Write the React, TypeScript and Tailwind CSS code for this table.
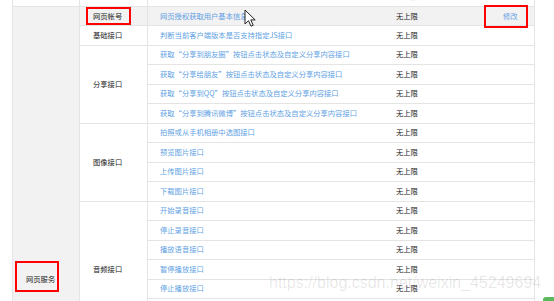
import React from "react";

type Group = { name: string; items: string[]; hl?: boolean };

const groups: Group[] = [
  { name: "网页帐号", items: ["网页授权获取用户基本信息"], hl: true },
  { name: "基础接口", items: ["判断当前客户端版本是否支持指定JS接口"] },
  {
    name: "分享接口",
    items: [
      "获取“分享到朋友圈”按钮点击状态及自定义分享内容接口",
      "获取“分享给朋友”按钮点击状态及自定义分享内容接口",
      "获取“分享到QQ”按钮点击状态及自定义分享内容接口",
      "获取“分享到腾讯微博”按钮点击状态及自定义分享内容接口",
    ],
  },
  {
    name: "图像接口",
    items: ["拍照或从手机相册中选图接口", "预览图片接口", "上传图片接口", "下载图片接口"],
  },
  {
    name: "音频接口",
    items: [
      "开始录音接口",
      "停止录音接口",
      "播放语音接口",
      "暂停播放接口",
      "停止播放接口",
      "上传语音接口",
      "下载语音接口",
    ],
  },
  { name: "智能接口", items: ["识别音频并返回识别结果接口"] },
  { name: "设备信息", items: ["获取网络状态接口"] },
  { name: "地理位置", items: ["使用微信内置地图查看位置接口", "获取地理位置接口"] },
  {
    name: "界面操作",
    items: [
      "隐藏右上角菜单接口",
      "显示右上角菜单接口",
      "关闭当前网页窗口接口",
      "批量隐藏功能按钮接口",
      "批量显示功能按钮接口",
      "隐藏所有非基础按钮接口",
      "显示所有功能按钮接口",
    ],
  },
];

const spanClass: Record<number, string> = {
  1: "row-span-1",
  2: "row-span-2",
  4: "row-span-4",
  7: "row-span-7",
};

const line = "border-[#e4e4e4]";

export default function App() {
  const cells: React.ReactNode[] = [];
  // previous (partially visible) row
  cells.push(<div key="p1" className={`col-start-1 border-b border-r ${line}`} />);
  cells.push(<div key="p2" className={`col-start-2 border-b border-r ${line}`} />);
  cells.push(<div key="p3" className={`col-start-3 border-b ${line}`} />);
  cells.push(
    <div key="p4" className={`col-start-4 border-b ${line} flex items-center pl-[12px] text-[#222]`}>
      无上限
    </div>
  );
  cells.push(<div key="p5" className={`col-start-5 border-b ${line}`} />);

  let first = true;
  groups.forEach((g, gi) => {
    g.items.forEach((it, ii) => {
      if (first) {
        cells.push(
          <div
            key="svc"
            className={`col-start-1 row-span-28 border-r ${line} bg-[#f2f2f2] flex items-center pl-[13px] text-[#222]`}
          >
            网页服务
          </div>
        );
        first = false;
      }
      if (ii === 0) {
        cells.push(
          <div
            key={`g${gi}`}
            className={`col-start-2 ${spanClass[g.items.length]} border-b border-r ${line} flex items-center pl-[13px] text-[#222] ${g.hl ? "bg-[#f2f2f2]" : "bg-white"}`}
          >
            {g.name}
          </div>
        );
      }
      const bg = g.hl ? "bg-[#f2f2f2]" : "bg-white";
      cells.push(
        <div
          key={`a${gi}-${ii}`}
          className={`col-start-3 border-b ${line} ${bg} flex items-center pl-[12px] text-[#619fe3] whitespace-nowrap overflow-hidden`}
        >
          {it}
        </div>
      );
      cells.push(
        <div
          key={`b${gi}-${ii}`}
          className={`col-start-4 border-b ${line} ${bg} flex items-center pl-[12px] text-[#222]`}
        >
          无上限
        </div>
      );
      cells.push(
        <div
          key={`c${gi}-${ii}`}
          className={`col-start-5 border-b ${line} ${bg} flex items-center pl-[12px] text-[#6aa3e6]`}
        >
          {g.hl ? "修改" : ""}
        </div>
      );
    });
  });

  return (
    <div
      className="relative w-[554px] h-[301px] overflow-hidden bg-white text-[7.3px] leading-none"
      style={{ fontFamily: '"Noto Sans CJK SC", "Noto Sans", sans-serif' }}
    >
      <div
        className={`ml-[12px] -mt-[12.5px] w-[523px] border-x ${line} grid grid-cols-[67px_68px_236px_107px_43px] auto-rows-[19.47px]`}
      >
        {cells}
      </div>

      {/* red annotation boxes */}
      <div className="absolute left-[86px] top-[7px] w-[45px] h-[18px] border-2 border-[#ff0000]" />
      <div className="absolute left-[484px] top-[5px] w-[44px] h-[23px] border-2 border-[#ff0000]" />
      <div className="absolute left-[15px] top-[261px] w-[44px] h-[31px] border-2 border-[#ff0000]" />

      {/* mouse cursor */}
      <svg
        className="absolute left-[244px] top-[9px]"
        width="13"
        height="19"
        viewBox="0 0 13 19"
      >
        <path
          d="M1 1 L1 15 L4.5 11.7 L7 17.2 L9.2 16.2 L6.8 10.9 L11.2 10.9 Z"
          fill="#fff"
          stroke="#222"
          strokeWidth="1"
          strokeLinejoin="round"
        />
      </svg>

      {/* watermark */}
      <div
        className="absolute left-[269px] top-[275px] text-[16px] leading-[16px] text-[rgba(0,0,0,0.1)] whitespace-nowrap"
        style={{ fontFamily: '"Liberation Sans", Arial, sans-serif' }}
      >
        https://blog.csdn.net/weixin_45249694
      </div>

      <div className="absolute left-[543px] top-[297px] w-[12px] h-[5px] rounded-tl-[3px] bg-[#5cb85c]" />
    </div>
  );
}
